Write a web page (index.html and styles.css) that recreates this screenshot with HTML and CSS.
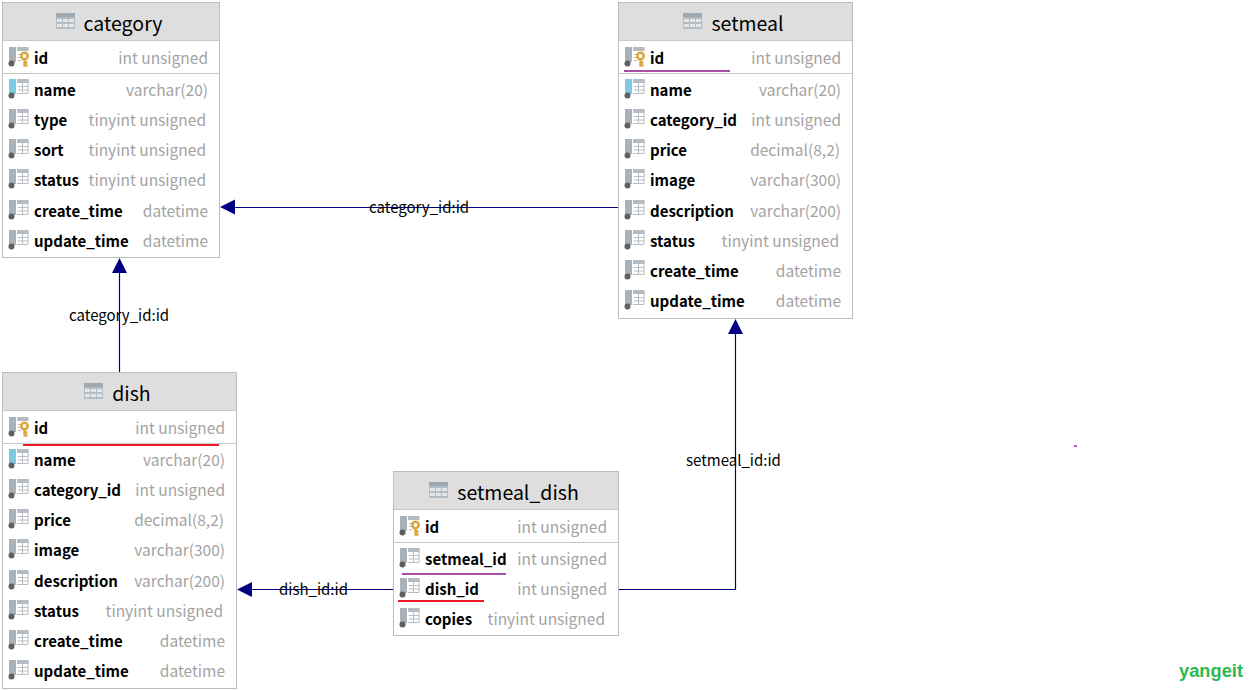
FILE: index.html
```html
<!DOCTYPE html>
<html lang="en">
<head>
<meta charset="utf-8">
<title>ER diagram</title>
<link rel="stylesheet" href="styles.css">
</head>
<body>
<svg width="0" height="0" class="defs">
  <defs>
    <symbol id="tbl" viewBox="0 0 19 16">
      <rect x="0" y="0" width="19" height="16" fill="#b4bcc4"/>
      <rect x="0" y="0" width="19" height="4" fill="#9fa9b2"/>
      <path d="M1 6h5v3H1zM7 6h5v3H7zM13 6h5v3h-5zM1 11h5v3H1zM7 11h5v3H7zM13 11h5v3h-5z" fill="#e4e7ea"/>
    </symbol>
    <symbol id="col" viewBox="0 0 21 20">
      <rect x="1" y="0" width="7" height="15" fill="#a9b1b9"/>
      <circle cx="3.500" cy="16.500" r="3" fill="#5f5f5f"/>
      <path d="M9 0.500h11v14H9" fill="#fff" stroke="#b7bdc3"/>
      <rect x="9" y="0" width="11.500" height="4" fill="#b4bbc2"/>
      <path d="M10 7.500h10M10 11h10M14.500 4v10" stroke="#b7bdc3" fill="none"/>
    </symbol>
    <symbol id="col-nn" viewBox="0 0 21 20">
      <rect x="1" y="0" width="7" height="15" fill="#7fc8e4"/>
      <circle cx="3.500" cy="16.500" r="3" fill="#5f5f5f"/>
      <path d="M9 0.500h11v14H9" fill="#fff" stroke="#b7bdc3"/>
      <rect x="9" y="0" width="11.500" height="4" fill="#b4bbc2"/>
      <path d="M10 7.500h10M10 11h10M14.500 4v10" stroke="#b7bdc3" fill="none"/>
    </symbol>
    <symbol id="col-pk" viewBox="0 0 21 20">
      <rect x="1" y="0" width="7" height="15" fill="#a9b1b9"/>
      <circle cx="3.500" cy="16.500" r="3" fill="#5f5f5f"/>
      <rect x="9" y="0" width="11.500" height="4" fill="#b4bbc2"/>
      <path d="M10 7.500h3M10 10.500h3M10 13.500h3" stroke="#b7bdc3" fill="none"/>
      <circle cx="16.500" cy="9" r="3.200" fill="none" stroke="#dba63d" stroke-width="2.600"/>
      <path d="M16.500 12v7.500M16.500 15.500h3M16.500 18.500h3" stroke="#dba63d" stroke-width="2.400" fill="none"/>
    </symbol>
  </defs>
</svg>

<main class="canvas">
  <svg class="edges" width="1254" height="690" viewBox="0 0 1254 690">
    <path class="edge" d="M119.500 372V270"/>
    <path class="head" d="M119.500 258l7.500 15h-15z"/>
    <path class="edge" d="M618 207.500H232"/>
    <path class="head" d="M220 207l15-7.500v15z"/>
    <path class="edge" d="M393 589.500H249"/>
    <path class="head" d="M237 589.500l15-7.500v15z"/>
    <path class="edge" d="M619 589.500H735.500V331"/>
    <path class="head" d="M735.500 319l7.500 15h-15z"/>
  </svg>

  <span class="edge-label label-a">category_id:id</span>
  <span class="edge-label label-b">category_id:id</span>
  <span class="edge-label label-c">setmeal_id:id</span>
  <span class="edge-label label-d">dish_id:id</span>

  <section class="node node-category">
    <header class="node-head"><svg class="tbl-icon"><use href="#tbl"/></svg><h2>category</h2></header>
    <div class="row key"><svg class="ic"><use href="#col-pk"/></svg><b>id</b><i>int unsigned</i></div>
    <div class="cols">
      <div class="row"><svg class="ic"><use href="#col-nn"/></svg><b>name</b><i>varchar(20)</i></div>
      <div class="row"><svg class="ic"><use href="#col"/></svg><b>type</b><i class="t">tinyint unsigned</i></div>
      <div class="row"><svg class="ic"><use href="#col"/></svg><b>sort</b><i class="t">tinyint unsigned</i></div>
      <div class="row"><svg class="ic"><use href="#col"/></svg><b>status</b><i class="t">tinyint unsigned</i></div>
      <div class="row"><svg class="ic"><use href="#col"/></svg><b>create_time</b><i>datetime</i></div>
      <div class="row"><svg class="ic"><use href="#col"/></svg><b>update_time</b><i>datetime</i></div>
    </div>
  </section>

  <section class="node node-setmeal">
    <header class="node-head"><svg class="tbl-icon"><use href="#tbl"/></svg><h2>setmeal</h2></header>
    <div class="row key"><svg class="ic"><use href="#col-pk"/></svg><b>id</b><i>int unsigned</i></div>
    <div class="cols">
      <div class="row"><svg class="ic"><use href="#col-nn"/></svg><b>name</b><i>varchar(20)</i></div>
      <div class="row"><svg class="ic"><use href="#col"/></svg><b>category_id</b><i>int unsigned</i></div>
      <div class="row"><svg class="ic"><use href="#col"/></svg><b>price</b><i class="d">decimal(8,2)</i></div>
      <div class="row"><svg class="ic"><use href="#col"/></svg><b>image</b><i>varchar(300)</i></div>
      <div class="row"><svg class="ic"><use href="#col"/></svg><b>description</b><i>varchar(200)</i></div>
      <div class="row"><svg class="ic"><use href="#col"/></svg><b>status</b><i class="t">tinyint unsigned</i></div>
      <div class="row"><svg class="ic"><use href="#col"/></svg><b>create_time</b><i>datetime</i></div>
      <div class="row"><svg class="ic"><use href="#col"/></svg><b>update_time</b><i>datetime</i></div>
    </div>
  </section>

  <section class="node node-dish">
    <header class="node-head"><svg class="tbl-icon"><use href="#tbl"/></svg><h2>dish</h2></header>
    <div class="row key"><svg class="ic"><use href="#col-pk"/></svg><b>id</b><i>int unsigned</i></div>
    <div class="cols">
      <div class="row"><svg class="ic"><use href="#col-nn"/></svg><b>name</b><i>varchar(20)</i></div>
      <div class="row"><svg class="ic"><use href="#col"/></svg><b>category_id</b><i>int unsigned</i></div>
      <div class="row"><svg class="ic"><use href="#col"/></svg><b>price</b><i class="d">decimal(8,2)</i></div>
      <div class="row"><svg class="ic"><use href="#col"/></svg><b>image</b><i>varchar(300)</i></div>
      <div class="row"><svg class="ic"><use href="#col"/></svg><b>description</b><i>varchar(200)</i></div>
      <div class="row"><svg class="ic"><use href="#col"/></svg><b>status</b><i class="t">tinyint unsigned</i></div>
      <div class="row"><svg class="ic"><use href="#col"/></svg><b>create_time</b><i>datetime</i></div>
      <div class="row"><svg class="ic"><use href="#col"/></svg><b>update_time</b><i>datetime</i></div>
    </div>
  </section>

  <section class="node node-link">
    <header class="node-head"><svg class="tbl-icon"><use href="#tbl"/></svg><h2>setmeal_dish</h2></header>
    <div class="row key"><svg class="ic"><use href="#col-pk"/></svg><b>id</b><i>int unsigned</i></div>
    <div class="cols">
      <div class="row"><svg class="ic"><use href="#col"/></svg><b>setmeal_id</b><i>int unsigned</i></div>
      <div class="row"><svg class="ic"><use href="#col"/></svg><b>dish_id</b><i>int unsigned</i></div>
      <div class="row"><svg class="ic"><use href="#col"/></svg><b>copies</b><i class="t">tinyint unsigned</i></div>
    </div>
  </section>

  <span class="mark purple mark-a"></span>
  <span class="mark red mark-b"></span>
  <span class="mark purple mark-c"></span>
  <span class="mark red mark-d"></span>
  <span class="speck"></span>
  <span class="logo">yangeit</span>
</main>
</body>
</html>
```

FILE: styles.css
```css
* { box-sizing: border-box; }
html, body { margin: 0; padding: 0; background: #fff; }
body { width: 1254px; height: 690px; overflow: hidden; font-family: "Noto Sans CJK SC", "Noto Sans", sans-serif; }
.defs { position: absolute; }
.canvas { position: relative; width: 1254px; height: 690px; }
.edges { position: absolute; left: 0; top: 0; }
.edge { fill: none; stroke: #000080; stroke-width: 1.200; }
.head { fill: #000080; }

.edge-label { position: absolute; font-size: 15px; line-height: 20px; color: #000; white-space: nowrap; }
.label-a { left: 369px; top: 197px; }
.label-b { left: 69px; top: 305px; }
.label-c { left: 686px; top: 450px; }
.label-d { left: 279px; top: 579px; }

.node { position: absolute; background: #fff; border: 1px solid #bdbdbd; padding-bottom: 2px; }
.node-category { left: 2px; top: 2px; width: 218px; }
.node-setmeal { left: 618px; top: 2px; width: 235px; }
.node-dish { left: 2px; top: 372px; width: 235px; }
.node-link { left: 393px; top: 471px; width: 226px; }

.node-head { display: flex; align-items: center; justify-content: center; gap: 9px; height: 38px; padding-right: 4px; background: #dedede; border-bottom: 1px solid #c8c8c8; }
.node-head h2 { margin: 0; padding-top: 2px; font-size: 19.500px; font-weight: 400; line-height: 24px; color: #000; }
.tbl-icon { width: 19px; height: 16px; margin-bottom: 2px; }

.row { display: flex; align-items: center; height: 30.25px; padding: 0 11px 0 5px; }
.key { height: 32.6px; border-bottom: 1px solid #c8c8c8; }
.ic { width: 21px; height: 20px; flex: none; margin-right: 5px; }
.row b { padding-top: 1px; font-size: 15px; font-weight: 700; color: #000; white-space: nowrap; }
.row i { margin-left: auto; font-size: 15.5px; font-style: normal; color: #a3a3a3; white-space: nowrap; }
.row i.t { margin-right: 2px; }
.row i.d { margin-right: 1px; }

.mark { position: absolute; height: 2px; }
.purple { background: #a94fa9; }
.red { background: #ed1c24; }
.mark-a { left: 624px; top: 70px; width: 106px; }
.mark-b { left: 23px; top: 444px; width: 196px; }
.mark-c { left: 402px; top: 573px; width: 104px; }
.mark-d { left: 398px; top: 600px; width: 86px; }
.speck { position: absolute; left: 1074px; top: 445px; width: 3px; height: 2px; background: #b55ab5; }

.logo { position: absolute; left: 1179px; top: 659px; font-family: "Liberation Sans", sans-serif; font-weight: 700; font-size: 18.3px; line-height: 24px; color: #2bb850; }
```
